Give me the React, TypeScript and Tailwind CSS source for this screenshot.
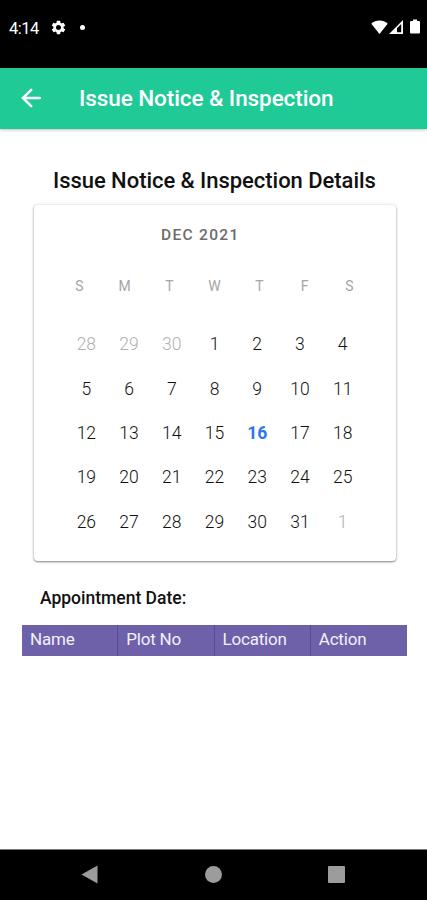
import { MdSettings } from "react-icons/md"

const WEEKDAYS = ["S", "M", "T", "W", "T", "F", "S"]

const WEEKS = [
  [28, 29, 30, 1, 2, 3, 4],
  [5, 6, 7, 8, 9, 10, 11],
  [12, 13, 14, 15, 16, 17, 18],
  [19, 20, 21, 22, 23, 24, 25],
  [26, 27, 28, 29, 30, 31, 1],
]

const COLUMNS = ["Name", "Plot No", "Location", "Action"]

function StatusBar() {
  return (
    <div className="flex h-[68px] items-start justify-between bg-black pl-[9px] pr-[7px] pt-[18px] text-white">
      <div className="flex h-[19px] items-center">
        <span className="mt-px w-[41px] text-[16.5px] leading-[19px] tracking-[-0.5px]">4:14</span>
        <MdSettings className="-mt-px h-[17px] w-[17px]" />
        <span className="ml-[13px] h-[5px] w-[5px] rounded-full bg-white" />
      </div>
      <div className="-mt-px flex h-[19px] items-center">
        <svg width="17" height="14" viewBox="0 0 17 14" fill="currentColor">
          <path d="M8.5 14 0.3 3.7C4.8-0.6 12.2-0.6 16.7 3.7Z" />
        </svg>
        <svg className="ml-px" width="14" height="14" viewBox="0 0 14 14" fill="currentColor">
          <path fillRule="evenodd" d="M0 14H14V0ZM8 12.2V8.2L12.2 4V12.2Z" />
        </svg>
        <svg className="ml-[7px]" width="10" height="15" viewBox="0 0 10 15" fill="currentColor">
          <path d="M3 0.5H7V2H9Q10 2 10 3V13.5Q10 14.5 9 14.5H1Q0 14.5 0 13.5V3Q0 2 1 2H3Z" />
        </svg>
      </div>
    </div>
  )
}

function AppBar() {
  return (
    <header className="flex h-[61px] items-center bg-[#20ca97] pl-[21px] text-white shadow-[0_1px_3px_rgba(0,0,0,0.25)]">
      <svg
        className="-mt-0.5"
        width="20"
        height="20"
        viewBox="0 0 20 20"
        fill="none"
        stroke="currentColor"
        strokeWidth="2.5"
        strokeLinecap="round"
      >
        <path d="M18.7 10H2M10.2 1.8 1.9 10 10.2 18.2" />
      </svg>
      <h1 className="-mt-0.5 ml-[38px] whitespace-nowrap text-[22.5px] font-medium leading-6 tracking-[-0.08px]">
        Issue Notice &amp; Inspection
      </h1>
    </header>
  )
}

function dayColor(day: number, week: number) {
  if ((week === 0 && day > 7) || (week === 4 && day < 7)) return "text-[#b0b0b0]"
  if (day === 16) return "font-bold text-[#2f74f0]"
  return "text-[#111]"
}

function Calendar() {
  return (
    <section className="ml-[34px] mr-[31px] mt-[11px] h-[356px] rounded-[4px] bg-white shadow-[0_1px_2px_rgba(0,0,0,0.45),0_0_4px_rgba(0,0,0,0.12)]">
      <div className="pl-[127px] pt-[20px] text-[15.5px] font-medium leading-5 tracking-[1.3px] text-[#6c6c6c]">
        DEC 2021
      </div>
      <div className="ml-[23px] mt-[31px] grid w-[315px] grid-cols-7 text-center text-[14px] leading-5 text-[#a6a6a6]">
        {WEEKDAYS.map((d, i) => (
          <span key={i}>{d}</span>
        ))}
      </div>
      <div className="ml-[31px] mt-[26px] w-[299px]">
        {WEEKS.map((week, w) => (
          <div key={w} className="grid h-[44.4px] grid-cols-7 items-center text-center text-[17.5px] font-light leading-5">
            {week.map((day) => (
              <span key={day} className={dayColor(day, w)}>
                {day}
              </span>
            ))}
          </div>
        ))}
      </div>
    </section>
  )
}

function NavBar() {
  return (
    <nav className="flex h-[51px] items-center border-t border-[#777] bg-black pl-[81px] text-[#9c9c9c]">
      <svg className="-mt-0.5" width="17" height="19" viewBox="0 0 17 19" fill="currentColor">
        <path d="M0.5 9.5 16.5 0.5V18.5Z" />
      </svg>
      <span className="-mt-0.5 ml-[107px] h-[17px] w-[17px] rounded-full bg-[#9c9c9c]" />
      <span className="-mt-0.5 ml-[106px] h-[17px] w-[17px] rounded-[1px] bg-[#9c9c9c]" />
    </nav>
  )
}

export default function App() {
  return (
    <div className="flex h-[900px] w-[427px] flex-col overflow-hidden bg-white font-['Roboto',sans-serif]">
      <StatusBar />
      <AppBar />
      <main className="flex-1">
        <h2 className="ml-[53px] mt-[39px] whitespace-nowrap text-[22px] font-medium leading-[26px] tracking-[-0.04px] text-[#111]">
          Issue Notice &amp; Inspection Details
        </h2>
        <Calendar />
        <p className="ml-10 mt-[25px] text-[17.5px] font-medium leading-6 text-[#111]">
          Appointment Date:
        </p>
        <div className="ml-[22px] mt-[15px] grid h-[31px] w-[385px] grid-cols-4 bg-[#6f60aa] text-[17px] leading-[29px] tracking-[-0.2px] text-[#f3f0fb]">
          {COLUMNS.map((name) => (
            <span key={name} className="border-r border-[#5a4c94] pl-2 last:border-r-0">
              {name}
            </span>
          ))}
        </div>
      </main>
      <NavBar />
    </div>
  )
}
